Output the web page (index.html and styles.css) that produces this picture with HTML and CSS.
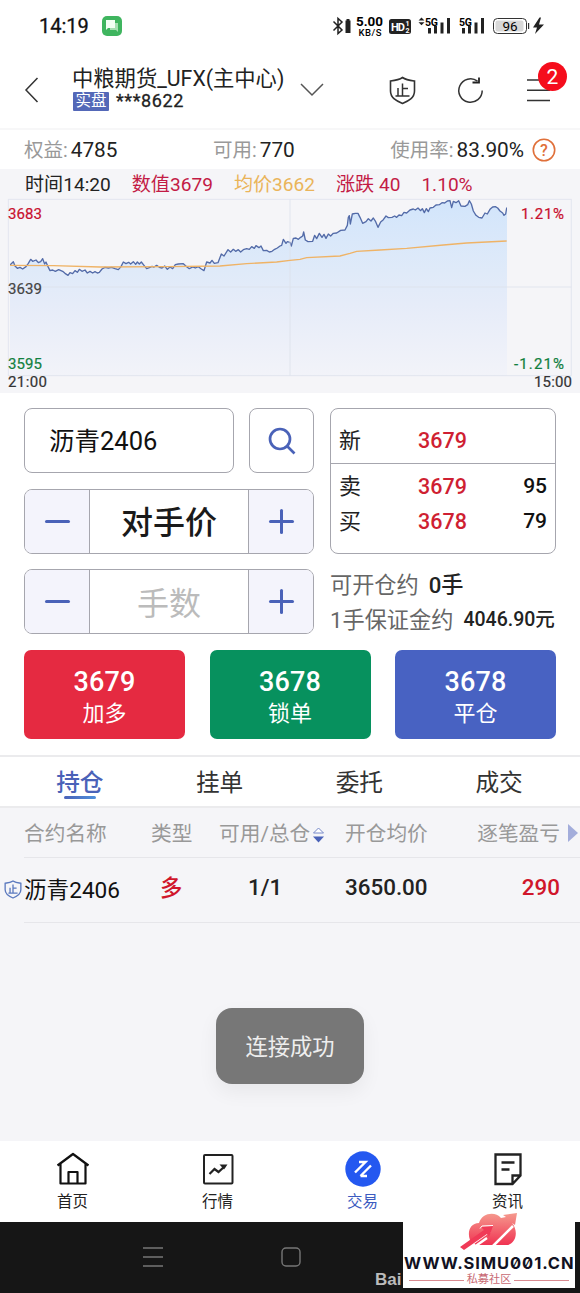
FILE: index.html
```html
<!DOCTYPE html>
<html lang="zh-CN">
<head>
<meta charset="utf-8">
<title>交易</title>
<meta name="viewport" content="width=device-width">
<link rel="stylesheet" href="styles.css">
</head>
<body>
<div class="phone">
  <div class="status">
    <span class="clock">14:19</span>
    <svg class="msg" width="20" height="20" viewBox="0 0 20 20"><rect width="20" height="20" rx="5" fill="#3fb55f"/><path d="M8 7h8v9l-2-2H8z" fill="#a5dfb2"/><path d="M4 4h9v8H6l-2 2z" fill="#f2fff4"/></svg>
    <svg class="signals" width="215" height="22" viewBox="332 15 215 22">
      <path d="M333.500 21.500l8.500 8.500-4 3.500V18.500l4 3.500-8.500 8.500" fill="none" stroke="#222" stroke-width="1.500"/>
      <path d="M345.500 20.500h1v-1.500h3v1.500h1V33h-5z" fill="#222"/>
      <text x="356" y="26" class="st" textLength="27" lengthAdjust="spacingAndGlyphs" font-size="12">5.00</text>
      <text x="358.500" y="36" class="s5" textLength="23" font-size="9.500">KB/S</text>
      <rect x="389" y="19" width="22" height="15" rx="2.500" fill="#222"/>
      <text x="391" y="31" class="st" textLength="14" font-size="11" fill="#fff">HD</text>
      <text x="405.500" y="26" class="st" font-size="7" fill="#fff">1</text><text x="405.500" y="33" class="st" font-size="7" fill="#fff">2</text>
      <path d="M418.500 20.500l3-3 3 3zm0 1.700h6l-3 3z" fill="#222"/>
      <text x="425" y="25.500" class="st" textLength="13" font-size="10.500">5G</text>
      <path d="M428 28h3v5.500h-3zm6-2h3v7.500h-3zm6.500-3.500h3v11h-3zm6.500-4.500h3v15.500h-3z" fill="#222"/>
      <text x="459" y="25.500" class="st" textLength="13" font-size="10.500">5G</text>
      <path d="M462 28h3v5.500h-3zm6-2h3v7.500h-3zm6.500-3.500h3v11h-3zm6.500-4.500h3v15.500h-3z" fill="#222"/>
      <rect x="493.500" y="18.500" width="33" height="15" rx="4" fill="#fff" stroke="#333"/>
      <rect x="495.500" y="20.500" width="28" height="11" rx="2" fill="#d8d8d8"/><path d="M528 23h1.200v6H528z" fill="#333"/>
      <text x="502.500" y="30.700" class="s4" textLength="15" font-size="13.500">96</text>
      <path d="M539.500 17.500l-6.500 10h4l-2 6.500 9-9.500h-5l2-7z" fill="#222"/>
    </svg>
  </div>

  <header class="top">
    <svg class="back" width="14" height="26" viewBox="0 0 14 26"><path d="M12.500 1L1 13l11.500 12" fill="none" stroke="#333" stroke-width="1.500"/></svg>
    <div class="account">
      <div class="broker">中粮期货_UFX(主中心)</div>
      <div class="acctline"><span class="tag">实盘</span><span class="acct">***8622</span></div>
    </div>
    <svg class="drop" width="24" height="14" viewBox="0 0 24 14"><path d="M1 1l11 11L23 1" fill="none" stroke="#555" stroke-width="1.500"/></svg>
    <svg class="shield" width="27" height="29" viewBox="0 0 27 29"><path d="M13.500 1.500C10 4 6 4.500 1.500 5v10c0 7 6 10 12 12.500 6-2.500 12-5.500 12-12.500V5C21.500 4.500 17 4 13.500 1.500z" fill="none" stroke="#333" stroke-width="1.600"/><path d="M13.500 7.500v12.500M13.500 12.500h5.500M9 12v8M6.500 20h14" fill="none" stroke="#333" stroke-width="1.500"/></svg>
    <svg class="reload" width="27" height="27" viewBox="0 0 27 27"><path d="M20.500 4.200A11.700 11.700 0 1 0 25.200 13.500" fill="none" stroke="#333" stroke-width="1.500"/><path d="M15.500 5.500h6.500V.5" fill="none" stroke="#222" stroke-width="1.800"/></svg>
    <div class="menu">
      <svg width="23" height="24" viewBox="0 0 23 24"><path d="M0 2h23M0 12.300h23M0 22.500h23" stroke="#333" stroke-width="1.600"/></svg>
      <span class="count">2</span>
    </div>
  </header>

  <div class="funds">
    <div class="fund"><span class="k">权益:</span><span class="v">4785</span></div>
    <div class="fund"><span class="k">可用:</span><span class="v">770</span></div>
    <div class="fund"><span class="k">使用率:</span><span class="v">83.90%</span>
      <svg class="help" width="24" height="24" viewBox="0 0 24 24"><circle cx="12" cy="12" r="10.700" fill="none" stroke="#e0703a" stroke-width="1.600"/><text x="12" y="17.500" text-anchor="middle" class="s5" font-size="16" fill="#e0703a">?</text></svg>
    </div>
  </div>

  <section class="chart">
    <div class="legend"><span>时间14:20</span><span class="crim">数值3679</span><span class="gold">均价3662</span><span class="crim">涨跌 40</span><span class="crim">1.10%</span></div>
    <svg class="plot" width="580" height="194" viewBox="0 199 580 194">
      <defs>
        <linearGradient id="area" gradientUnits="userSpaceOnUse" x1="0" y1="208" x2="0" y2="738"><stop offset="0" stop-color="#d2e5fb"/><stop offset=".4" stop-color="#dfeaf9"/><stop offset=".6" stop-color="#e6ecf9"/><stop offset="1" stop-color="#f2f3f9"/></linearGradient>
      </defs>
      <g transform="translate(0 130) scale(.33333)">
        <!-- price line, carried outside the plot edges so one path closes into the area -->
        <clipPath id="plotclip"><path d="M30 200H1521V737H30z"/></clipPath>
        <path clip-path="url(#plotclip)" fill="url(#area)" stroke="#536ba8" stroke-width="4" stroke-linejoin="round" d="M20 745V405H30L40 395 45 408 52 415 60 412 68 417 78 410 85 400 92 388 98 394 108 390 115 398 122 395 128 386 134 402 138 396 144 410 150 422 158 420 166 424 176 419 188 424 195 430 204 436 210 428 218 431 225 422 232 427 238 418 246 424 255 420 262 429 270 424 278 429 285 425 292 429 298 427 306 417 315 412 325 414 335 412 345 416 355 419 363 410 370 396 378 401 386 397 392 402 400 395 407 403 412 396 418 402 424 396 432 406 440 416 448 413 456 409 462 411 470 406 478 412 486 414 494 408 502 418 510 411 518 416 526 404 535 402 550 401 560 410 568 416 578 411 586 414 595 410 604 417 612 422 620 396 630 399 636 391 643 400 654 398 664 372 672 378 684 359 692 366 700 358 707 364 715 359 722 366 730 359 740 356 748 358 755 350 763 355 768 347 777 353 783 348 790 362 800 361 808 366 816 364 824 358 832 354 840 348 845 346 850 328 858 340 862 335 870 337 874 348 880 325 888 324 895 328 902 322 908 318 911 306 916 330 924 335 938 334 944 316 950 326 958 310 966 322 972 313 978 325 985 312 992 318 1000 310 1010 309 1022 301 1035 300 1042 286 1045 262 1048 257 1051 282 1057 252 1066 250 1074 250 1080 262 1088 280 1098 275 1105 266 1113 273 1120 264 1127 275 1134 292 1142 276 1150 269 1158 258 1165 263 1176 262 1184 258 1190 262 1197 255 1205 257 1212 247 1220 249 1230 240 1240 237 1246 240 1254 234 1262 242 1267 236 1273 248 1279 236 1285 245 1290 234 1300 232 1308 225 1318 224 1326 218 1334 219 1342 213 1350 212 1355 233 1360 214 1368 218 1376 212 1383 228 1395 229 1403 224 1408 212 1414 222 1420 243 1428 256 1436 262 1446 264 1455 249 1462 252 1470 238 1478 231 1486 230 1493 234 1500 243 1508 249 1512 256 1517 252 1520 234 1530 230V745z"/>
        <path d="M25 208H1714V737H25zM25 471H1714M870 208V737" fill="none" stroke="#dde1ec" stroke-opacity=".8" stroke-width="3"/>
        <path fill="none" stroke="#efb366" stroke-width="4" d="M30 406L160 407 300 411 500 410 660 408 740 401 830 396 870 391 900 388 920 383 1020 378 1050 370 1070 364 1140 360 1220 355 1330 345 1400 339 1520 333"/>
      </g>
      <g class="axis" font-size="15">
        <text x="8" y="218.500" textLength="34" fill="#c8102e" stroke="#c8102e">3683</text>
        <text x="8" y="293.500" textLength="34" fill="#444" stroke="#444">3639</text>
        <text x="8" y="368.500" textLength="34" fill="#12803f" stroke="#12803f">3595</text>
        <text x="8" y="386.500" textLength="39" fill="#333" stroke="#333">21:00</text>
        <text x="521" y="218.500" textLength="43" fill="#c8102e" stroke="#c8102e">1.21%</text>
        <text x="514" y="368.500" textLength="50" fill="#12803f" stroke="#12803f">-1.21%</text>
        <text x="534" y="386.500" textLength="38" fill="#333" stroke="#333">15:00</text>
      </g>
    </svg>
  </section>

  <section class="order">
    <div class="left">
      <div class="pick"><div class="symbol">沥青2406</div>
        <div class="search"><svg width="28" height="28" viewBox="0 0 28 28"><circle cx="12" cy="12" r="10" fill="none" stroke="#4a62b8" stroke-width="2.700"/><path d="M19 19l7.500 7.500" stroke="#4a62b8" stroke-width="2.700"/></svg></div></div>
      <div class="stepper"><span class="step minus"></span><span class="field">对手价</span><span class="step plus"></span></div>
      <div class="stepper"><span class="step minus"></span><span class="field hint">手数</span><span class="step plus"></span></div>
    </div>
    <div class="right">
      <div class="quote">
        <div class="q last"><span>新</span><b>3679</b></div>
        <div class="q"><span>卖</span><b>3679</b><i>95</i></div>
        <div class="q"><span>买</span><b>3678</b><i>79</i></div>
      </div>
      <div class="est"><span>可开仓约</span><b>0手</b></div>
      <div class="est"><span>1手保证金约</span><b class="sm">4046.90元</b></div>
    </div>
    <div class="actions">
      <div class="act red"><b>3679</b><span>加多</span></div>
      <div class="act green"><b>3678</b><span>锁单</span></div>
      <div class="act blue"><b>3678</b><span>平仓</span></div>
    </div>
  </section>

  <div class="tabs"><span class="on">持仓</span><span>挂单</span><span>委托</span><span>成交</span></div>

  <section class="positions">
    <div class="row head"><span>合约名称</span><span>类型</span><span class="avail">可用/总仓<svg width="13" height="18" viewBox="0 0 13 18"><path d="M1.500 7L6.500 2l5 5z" fill="#fff" stroke="#7688c8"/><path d="M1 10.500h11l-5.500 6z" fill="#4a62b8"/></svg></span><span>开仓均价</span><span class="end">逐笔盈亏</span><svg class="more" width="10" height="18" viewBox="0 0 10 18"><path d="M0 0l10 9-10 9z" fill="#a3addb"/></svg></div>
    <div class="row data">
      <svg class="guard" width="18" height="19" viewBox="0 0 27 29"><path d="M13.500 1.500C10 4 6 4.500 1.500 5v10c0 7 6 10 12 12.500 6-2.500 12-5.500 12-12.500V5C21 4.500 17 4 13.500 1.500z" fill="none" stroke="#5b79be" stroke-width="2"/><path d="M13.500 7v13M13.500 12.500h5.500M9 12v8M6.500 20h14" fill="none" stroke="#5b79be" stroke-width="2"/></svg>
      <span class="name">沥青2406</span><b class="up">多</b><b class="lots">1/1</b><b>3650.00</b><b class="end up">290</b></div>
    <div class="toast">连接成功</div>
  </section>

  <nav class="nav">
    <div class="item"><svg width="34" height="34" viewBox="0 0 34 34"><path d="M1.500 13.500L17 2l15.500 11.500M4.500 11.500v20h25v-20M12.500 31V20h9v11" fill="none" stroke="#111" stroke-width="2.200" stroke-linejoin="round"/></svg><span>首页</span></div>
    <div class="item"><svg width="34" height="34" viewBox="0 0 34 34"><rect x="3" y="3" width="28.500" height="28.500" rx="1" fill="none" stroke="#222" stroke-width="2"/><path d="M8.500 22l5-5 4 3 6.500-6" fill="none" stroke="#222" stroke-width="2.200"/><path d="M18.500 12.500h8l-3.500 5z" fill="#222"/></svg><span>行情</span></div>
    <div class="item on"><svg width="36" height="36" viewBox="0 0 36 36"><circle cx="18" cy="18" r="17.700" fill="#2458f0"/><path d="M10 21.500L20.500 11H14M15.500 25L26 14.500M15.500 25H22" fill="none" stroke="#fff" stroke-width="2.400"/></svg><span>交易</span></div>
    <div class="item"><svg width="34" height="34" viewBox="0 0 34 34"><path d="M4.500 2.500h25v21l-8 8.500h-17zM29.500 23.500h-8V32M10.500 10.500h13M10.500 17.500h8" fill="none" stroke="#222" stroke-width="2.300"/></svg><span>资讯</span></div>
  </nav>

  <footer class="sys">
    <svg class="recent" width="20" height="20" viewBox="0 0 20 20"><path d="M0 1h20M0 10h20M0 19h20" stroke="#777" stroke-width="1.300"/></svg>
    <svg class="homekey" width="20" height="20" viewBox="0 0 20 20"><rect x="1" y="1" width="18" height="18" rx="4" fill="none" stroke="#777" stroke-width="1.400"/></svg>
    <span class="baidu">Bai</span>
    <div class="mark">
      <svg class="cloud" width="58" height="39" viewBox="0 0 58 39"><defs><linearGradient id="pink" x1="0" y1="0" x2="0" y2="1"><stop offset="0" stop-color="#f59a8e"/><stop offset="1" stop-color="#f03352"/></linearGradient></defs>
        <path fill="url(#pink)" d="M10 28C7 20 10 11 19 11 22 1 35-1 41 6L46 5 43 3 57 1 55 13 52 11C59 19 56 33 46 33H16z"/>
        <path d="M3 38.500L30 19M15 34.500L27 26M33 34L53 14" stroke="#fff" stroke-width="2.500"/><path fill="#f03a57" d="M0 35L24 18 21 15 33 14 29 25 27 22 4 38z"/><path d="M20 16.500l2-2.500 11-.5" fill="none" stroke="#fff"/></svg>
      <div class="url">WWW.SIMU001.CN</div>
      <div class="club"><span>私募社区</span></div>
    </div>
  </footer>
</div>
</body>
</html>
```
FILE: styles.css
```css
* { box-sizing: border-box; }
body { margin: 0; background: #fff; font-family: Roboto, "Noto Sans CJK SC", sans-serif; color: #222; }
svg { display: block; flex: none; overflow: visible; }
b { font-weight: 500; }
i { font-style: normal; }
span, b, i { white-space: nowrap; }
.st { font-family: Roboto, sans-serif; font-weight: 700; }
.s4 { font-family: Roboto, sans-serif; }
.s5 { font-family: Roboto, sans-serif; font-weight: 500; }
.axis { font-family: Roboto, sans-serif; stroke-width: .2px; }
.phone { width: 580px; height: 1293px; overflow: hidden; display: flex; flex-direction: column; }
.phone > * { flex: none; }

.status { height: 52px; display: flex; align-items: center; padding: 0 33px 0 39px; }
.clock { font-size: 20px; color: #111; -webkit-text-stroke: .3px; }
.msg { margin-left: 13px; }
.signals { margin-left: auto; }

.top { height: 78px; display: flex; align-items: center; padding-left: 25px; border-bottom: 2px solid #f7f7f8; }
.account { margin-left: 33px; width: 216px; }
.broker { font-size: 21.3px; line-height: 26px; margin-top: -3px; white-space: nowrap; }
.acctline { display: flex; align-items: center; height: 19px; padding-left: 1px; }
.tag { width: 36px; height: 19px; background: #5468b8; color: #fff; font-size: 15.5px; line-height: 18px; text-align: center; border-radius: 1px; }
.acct { margin-left: 7px; font-size: 18px; letter-spacing: .6px; margin-top: -2px; -webkit-text-stroke: .3px; }
.drop { margin-left: 12px; }
.shield { margin-left: 65px; }
.reload { margin-left: 41px; }
.menu { position: relative; margin-left: 43px; }
.count { position: absolute; left: 11px; top: -16px; width: 29px; height: 29px; border-radius: 50%; background: #f50d1c; color: #fff; font-size: 21px; line-height: 30px; text-align: center; }

.funds { height: 39px; display: flex; align-items: center; justify-content: space-between; padding: 0 24px; }
.fund { display: flex; align-items: center; }
.k { color: #999; font-size: 19.5px; line-height: 36px; padding-top: 2px; }
.v { font-size: 20.800px; margin-left: 3px; }
.help { margin-left: 8px; }

.chart { height: 224px; background: #f5f5f8; }
.legend { height: 30px; display: flex; gap: 21px; padding-left: 25px; font-size: 19.100px; line-height: 32px; }
.crim { color: #c31b45; }
.gold { color: #eab45a; }

.order { height: 362px; padding: 15px 24px 0; display: grid; grid-template: 226px 89px / 290px 226px; column-gap: 16px; row-gap: 16px; }
.left { display: flex; flex-direction: column; gap: 15.500px; }
.pick { display: flex; justify-content: space-between; }
.symbol, .search, .stepper, .quote { border: 1px solid #a6a6ae; border-radius: 8px; height: 65px; }
.symbol { width: 210px; padding-left: 24px; font-size: 25.500px; line-height: 65px; color: #111; }
.search { width: 65px; display: flex; align-items: center; justify-content: center; }
.stepper { display: flex; overflow: hidden; }
.step { width: 64px; background: #f4f4fc; position: relative; flex: none; }
.step::before, .plus::after { content: ""; position: absolute; left: 20px; top: 30px; width: 25px; height: 3px; border-radius: 2px; background: #4a62b8; }
.plus::after { transform: rotate(90deg); }
.field { flex: 1; border: solid #a6a6ae; border-width: 0 1px; text-align: center; font-size: 32px; line-height: 67px; font-weight: 500; color: #1a1a1a; }
.field.hint { color: #bbb; font-weight: 400; line-height: 69px; }
.quote { height: 146px; margin-bottom: 13px; }
.q { display: grid; grid-template-columns: 79px 1fr auto; padding: 0 8px; font-size: 22px; line-height: 35px; align-items: center; }
.q b { color: #cf1f32; font-size: 21.500px; }
.q i { font-weight: 500; font-size: 21px; color: #111; }
.q.last { height: 55px; border-bottom: 1px solid #a6a6ae; margin-bottom: 5px; align-content: center; padding-top: 9px; }
.q.last span, .q.last b { line-height: 46px; }
.est { height: 35px; display: flex; align-items: center; gap: 10px; font-size: 22.200px; line-height: 34px; color: #666; white-space: nowrap; }
.est b { color: #222; }
.est .sm { font-size: 19.500px; }
.actions { grid-column: 1 / 3; width: 532px; display: flex; justify-content: space-between; }
.act { width: 161px; height: 89px; border-radius: 7px; color: #fff; display: flex; flex-direction: column; align-items: center; padding-top: 16px; font-size: 22px; }
.act b { font-size: 27px; line-height: 32px; letter-spacing: .2px; }
.act span { line-height: 32px; }
.red { background: #e52a41; }
.green { background: #07915e; }
.blue { background: #4862c2; }

.tabs { height: 53px; border: solid #ebebed; border-width: 2px 0; display: flex; padding: 0 11px 0 10px; font-size: 23.700px; line-height: 52px; color: #333; }
.tabs span { flex: 1; text-align: center; position: relative; }
.tabs .on { color: #4a62b8; font-weight: 500; }
.tabs .on::after { content: ""; position: absolute; left: 54px; top: 39px; width: 32px; height: 3px; border-radius: 2px; background: linear-gradient(90deg, #4a62b8, #4f90dc); }

.positions { height: 333px; background: #f5f5f8; padding-left: 24px; position: relative; }
.row { position: relative; display: grid; grid-template-columns: 127px 68px 126px 83px 132px; border-bottom: 1px solid #e6e6ea; white-space: nowrap; }
.head { height: 50px; font-size: 20.700px; line-height: 53px; color: #999; }
.avail { display: flex; align-items: center; gap: 2px; }
.end { text-align: right; }
.more { position: absolute; left: 544px; top: 16px; }
.data { height: 65px; font-size: 22.400px; line-height: 59px; }
.data b { color: #222; }
.data .name { line-height: 65px; font-size: 22.600px; color: #111; }
.data .up { color: #d0162b; }
.data b.up:not(.end) { padding-left: 9px; line-height: 61px; }
.data .lots { padding-left: 29px; }
.guard { position: absolute; left: -20px; top: 22px; }
.toast { position: absolute; left: 216px; top: 200px; width: 148px; height: 76px; border-radius: 16px; background: #777; color: #eee; font-size: 22.300px; line-height: 79px; text-align: center; box-shadow: 0 8px 20px rgba(0,0,0,.06); }

.nav { height: 81px; display: flex; background: #fff; }
.item { width: 145px; height: 81px; display: flex; flex-direction: column; align-items: center; padding-top: 11px; font-size: 15.500px; }
.item svg { margin-bottom: 5px; }
.item.on { color: #3c5bc0; padding-top: 10px; }
.item.on svg { margin-bottom: 4px; }
.item span { line-height: 23px; }

.sys { height: 71px; background: #161616; display: flex; position: relative; padding: 25px 0 0 143px; }
.homekey { margin-left: 118px; }
.baidu { margin: 23px 0 0 74px; font: 700 17px/20px "Liberation Sans", sans-serif; color: #bbb; }
.mark { position: absolute; left: 403px; top: 0; width: 172px; height: 66px; background: #fff; }
.cloud { position: absolute; left: 57px; top: -10px; }
.url { margin: 31px 0 0 1px; font: 700 16.500px/20px Inter, sans-serif; font-feature-settings: "zero"; letter-spacing: .900px; color: #111122; white-space: nowrap; }
.club { display: flex; align-items: center; gap: 3px; margin: 0 6px; font-size: 11.200px; line-height: 14px; color: #c86a74; }
.club::before, .club::after { content: ""; flex: 1; height: 1px; background: #d98a90; }
```
